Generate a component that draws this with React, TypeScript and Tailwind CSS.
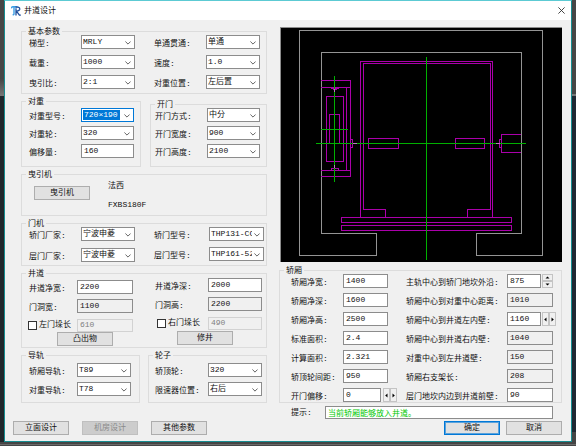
import React, { useId, useState } from 'react';
import clsx from 'clsx';

const Group = ({ title, className, children }: { title: string; className?: string; children: React.ReactNode }) => (
    <fieldset className={clsx('min-w-0 border border-[#dcdcdc]', className)}>
        <legend className="ml-1 h-px px-[2px] leading-px">{title}</legend>
        {children}
    </fieldset>
);

type RowProps = { label: string; labelWidth?: string; children: (id: string) => React.ReactNode };

const Row = ({ label, labelWidth = 'w-[53px]', children }: RowProps) => {
    const id = useId();
    return (
        <div className="flex h-[14px] items-center">
            <label htmlFor={id} className={clsx('shrink-0 whitespace-nowrap pl-px pt-1', labelWidth)}>{label}</label>
            {children(id)}
        </div>
    );
};

type SelectProps = { label: string; value: string; labelWidth?: string; active?: boolean };

const SelectRow = ({ label, value, labelWidth, active }: SelectProps) => (
    <Row label={label} labelWidth={labelWidth}>
        {(id) => (
            <div className={clsx('relative h-[14px] min-w-0 flex-1 border bg-white', active ? 'border-[#0078d7] pt-px' : 'border-[#8c8c8c]')}>
                <select
                    id={id}
                    defaultValue={value}
                    className={clsx('block appearance-none overflow-hidden pl-px outline-none', active ? 'ml-px h-[10px] w-[37px] bg-[#0078d7] leading-[10px] text-white' : 'h-[12px] w-[calc(100%-11px)] leading-[12px]')}
                >
                    <option>{value}</option>
                </select>
                <svg viewBox="0 0 6 4" className="pointer-events-none absolute right-[3px] top-[5px] h-1 w-[6px]" fill="none" stroke="#555" strokeWidth="0.9">
                    <path d="M0.4 0.5 L3 3.1 L5.6 0.5" />
                </svg>
            </div>
        )}
    </Row>
);

type FieldProps = { label: string; value: string; labelWidth?: string; readOnly?: boolean; after?: React.ReactNode };

const FieldRow = ({ label, value, labelWidth, readOnly, after }: FieldProps) => (
    <Row label={label} labelWidth={labelWidth}>
        {(id) => (
            <>
                <input
                    id={id}
                    defaultValue={value}
                    readOnly={readOnly}
                    className={clsx('h-[14px] w-0 min-w-0 flex-1 border border-[#8c8c8c] px-[2px] pb-px outline-none', readOnly ? 'bg-[#f0f0f0]' : 'bg-white')}
                />
                {after}
            </>
        )}
    </Row>
);

const CheckRow = ({ label, value, labelWidth }: { label: string; value: string; labelWidth: string }) => {
    const [checked, setChecked] = useState(false);
    return (
        <div className="flex h-[14px] items-center">
            <label className={clsx('flex shrink-0 items-center gap-[2px] whitespace-nowrap', labelWidth)}>
                <input
                    type="checkbox"
                    checked={checked}
                    onChange={(e) => setChecked(e.target.checked)}
                    className="size-[9px] appearance-none border border-[#333] bg-white checked:bg-[#0078d7]"
                />
                {label}
            </label>
            <input
                aria-label={label}
                disabled={!checked}
                defaultValue={value}
                className="h-[13px] w-0 min-w-0 flex-1 border border-[#d2d2d2] px-[2px] pb-px text-[#808080]"
            />
        </div>
    );
};

const Button = ({ children, className, disabled }: { children: React.ReactNode; className?: string; disabled?: boolean }) => (
    <button
        disabled={disabled}
        className={clsx('block h-[14px] w-14 border leading-[12px]', disabled ? 'border-[#bfbfbf] bg-[#cccccc] text-[#8a8a8a]' : 'bg-[#e1e1e1]', className ?? 'border-[#adadad]')}
    >
        {children}
    </button>
);

const Spinner = ({ vertical, className }: { vertical?: boolean; className?: string }) => {
    const arrows = vertical ? ['M1.5 3.5 H5.5 L3.5 1.5 Z', 'M1.5 1.5 H5.5 L3.5 3.5 Z'] : ['M3.5 0.5 V4.5 L1.2 2.5 Z', 'M1.5 0.5 V4.5 L3.8 2.5 Z'];
    return (
        <div className={clsx('flex h-[14px] w-[11px] shrink-0', vertical && 'flex-col', className)}>
            {arrows.map((d, i) => (
                <button key={d} aria-label={i ? '增加' : '减少'} className="flex flex-1 items-center justify-center border border-[#c4c4c4] bg-[#f0f0f0]">
                    <svg viewBox={vertical ? '0 0 7 5' : '0 0 5 5'} className={vertical ? 'h-[5px] w-[7px]' : 'h-[5px] w-[5px] shrink-0'}>
                        <path d={d} fill="#000" />
                    </svg>
                </button>
            ))}
        </div>
    );
};

const ShaftPlan = () => (
    <div className="pl-px">
        <svg viewBox="280 27 282 235" className="block w-full bg-black" fill="none" strokeWidth="1" shapeRendering="crispEdges">
            <path stroke="#949494" d="M376.5 255.5 H299.5 V30.5 H542.5 V255.5 H476.5 V233.5 H521.5 V52.5 H321.5 V233.5 H376.5 Z" />
            <g stroke="#aa00aa">
                <path d="M360.5 217 V61.5 H492.5 V217" />
                <path d="M385.5 217 V209.5 H363.5 V63.5 H490.5 V209.5 H467.5 V217" />
                <path d="M341.5 217.5 H511.5 V222.5 H341.5 Z M341.5 225.5 H511.5 V230.5 H341.5 Z" />
                <path d="M368.5 138.5 H398.5 V148.5 H368.5 Z M455.5 138.5 H484.5 V148.5 H455.5 Z" />
                <path d="M521 134.5 H501.5 V152.5 H521" />
                <path d="M321 80.5 H350.5 V176.5 H321 M321 87.5 H350.5 M346.5 87.5 V170.5 M321 170.5 H350.5" />
                <path d="M326.5 96.5 H343.5 V161.5 H326.5 Z M329.5 143.5 V114.5 H339.5 V143.5 Z" />
                <path d="M351 139.5 H352.5 V147.5 H351 M501 139.5 H499.5 V147.5 H501" />
                <path d="M331 88.5 H338.5 M332.5 89.5 H337 M331.5 170 V168.5 H338.5 V170" />
            </g>
            <g stroke="#00b000">
                <path d="M426.5 57 V260 M316 143.5 H526 M334.5 76 V182" />
                <path d="M321 129.5 H348" />
            </g>
            <path stroke="#c070c0" d="M353 143.5 H357 M496 143.5 H500 M334.5 89 V92 M334.5 165 V168" />
            <path stroke="#8c8c8c" d="M280 27.5 H562 M280.5 27 V262" />
        </svg>
    </div>
);

const App = () => {
    const hintId = useId();
    return (
        <div className="flex min-h-screen flex-col bg-[#454545] font-['Liberation_Mono','Noto_Sans_CJK_SC',monospace] text-[8px] leading-[10px] text-[#111]">
            <div className="flex">
                <div className="flex w-1 shrink-0 flex-col bg-[#20272c]">
                    <div className="h-[78px] bg-[#464646]" />
                    <div className="h-[18px] bg-linear-to-b from-[#444] to-[#777]" />
                </div>
                <main className="min-w-0 flex-1 border border-[#168d91] border-t-[#5ccad3] bg-[#f0f0f0] pb-[6px]">
                    <header className="flex h-[19px] items-center bg-white px-[6px]">
                        <svg viewBox="0 0 10 10" className="size-[10px]" fill="none">
                            <path d="M0.3 2.3 Q0.5 0.7 2.2 0.8 H6.5 M3 1 V8.2 L1.7 9.2" stroke="#3b9ee5" strokeWidth="1.4" />
                            <path d="M5 9.4 V2.2 M4.4 1.2 H7.2 Q9 1.6 8.8 3.2 Q8.4 5 5.5 5.1 L8.4 9.2 H9.8" stroke="#1c4d9c" strokeWidth="1.3" />
                        </svg>
                        <h1 className="ml-[3px]">井道设计</h1>
                        <button aria-label="关闭" className="ml-auto">
                            <svg viewBox="0 0 7 7" className="size-[7px]" stroke="#333" strokeWidth="0.9">
                                <path d="M0.4 0.4 L6.6 6.6 M6.6 0.4 L0.4 6.6" />
                            </svg>
                        </button>
                    </header>

                    <div className="grid grid-cols-[254fr_283fr] gap-x-3 pl-2 pr-[9px]">
                        <div className="flex flex-col pt-[11px]">
                            <div className="ml-2 flex flex-col gap-[7px]">
                                <Group title="基本参数">
                                    <div className="grid grid-cols-2 gap-x-[18px] gap-y-[6px] px-[6px] pb-1 pt-[3px]">
                                        <SelectRow label="梯型:" value="MRLY" />
                                        <SelectRow label="单通贯通:" value="单通" />
                                        <SelectRow label="载重:" value="1000" />
                                        <SelectRow label="速度:" value="1.0" />
                                        <SelectRow label="曳引比:" value="2:1" />
                                        <SelectRow label="对重位置:" value="左后置" />
                                    </div>
                                </Group>

                                <div className="grid grid-cols-[120fr_117fr] gap-x-[9px]">
                                    <Group title="对重">
                                        <div className="flex flex-col gap-1 px-[6px] pb-2 pt-[6px]">
                                            <SelectRow label="对重型号:" value="720×190" active />
                                            <SelectRow label="对重轮:" value="320" />
                                            <FieldRow label="偏移量:" value="160" />
                                        </div>
                                    </Group>
                                    <Group title="开门" className="mt-[3px]">
                                        <div className="flex flex-col gap-1 pl-[3px] pr-[6px] pt-[3px]">
                                            <SelectRow label="开门方式:" value="中分" />
                                            <SelectRow label="开门宽度:" value="900" />
                                            <SelectRow label="开门高度:" value="2100" />
                                        </div>
                                    </Group>
                                </div>

                                <Group title="曳引机">
                                    <div className="flex gap-[18px] pb-[5px] pl-3 pt-[6px]">
                                        <div className="pt-[5px]">
                                            <Button>曳引机</Button>
                                        </div>
                                        <div className="flex flex-col gap-[9px]">
                                            <p>法西</p>
                                            <p>FXBS180F</p>
                                        </div>
                                    </div>
                                </Group>

                                <Group title="门机">
                                    <div className="grid grid-cols-[107fr_111fr] gap-x-[18px] pb-[3px] pl-[6px] pr-[2px] pt-[3px]">
                                        <div className="flex flex-col gap-[7px]">
                                            <SelectRow label="轿门厂家:" value="宁波申菱" />
                                            <SelectRow label="层门厂家:" value="宁波申菱" />
                                        </div>
                                        <div className="flex flex-col gap-[6px]">
                                            <SelectRow label="轿门型号:" value="THP131-CC" labelWidth="w-14" />
                                            <SelectRow label="层门型号:" value="THP161-52" labelWidth="w-14" />
                                        </div>
                                    </div>
                                </Group>

                                <Group title="井道">
                                    <div className="grid grid-cols-[105fr_108fr] gap-x-[21px] pb-px pl-[6px] pr-1">
                                        <div className="pt-[6px]">
                                            <div className="flex flex-col gap-[5px]">
                                                <FieldRow label="井道净宽:" value="2200" labelWidth="w-[49px]" />
                                                <FieldRow label="门洞宽:" value="1100" labelWidth="w-[49px]" readOnly />
                                                <CheckRow label="左门垛长" value="610" labelWidth="w-[49px]" />
                                            </div>
                                            <Button className="ml-[29px] border-[#adadad]">凸出物</Button>
                                        </div>
                                        <div className="pt-1">
                                            <div className="flex flex-col gap-[5px]">
                                                <FieldRow label="井道净深:" value="2000" labelWidth="w-[54px]" />
                                                <FieldRow label="门洞高:" value="2200" labelWidth="w-[54px]" readOnly />
                                                <CheckRow label="右门垛长" value="490" labelWidth="w-[54px] pl-[3px]" />
                                            </div>
                                            <Button className="ml-[23px] mt-px border-[#adadad]">修井</Button>
                                        </div>
                                    </div>
                                </Group>

                                <div className="grid grid-cols-2 gap-x-2">
                                    <Group title="导轨">
                                        <div className="flex flex-col gap-[5px] pb-[6px] pl-[6px] pr-2 pt-[7px]">
                                            <SelectRow label="轿厢导轨:" value="T89" labelWidth="w-[49px]" />
                                            <SelectRow label="对重导轨:" value="T78" labelWidth="w-[49px]" />
                                        </div>
                                    </Group>
                                    <Group title="轮子">
                                        <div className="flex flex-col gap-[5px] pl-[5px] pr-1 pt-[7px]">
                                            <SelectRow label="轿顶轮:" value="320" labelWidth="w-[54px]" />
                                            <SelectRow label="限速器位置:" value="右后" labelWidth="w-[54px]" />
                                        </div>
                                    </Group>
                                </div>
                            </div>

                            <div className="mt-auto flex gap-[13px]">
                                <Button>立面设计</Button>
                                <Button disabled>机房设计</Button>
                                <Button>其他参数</Button>
                            </div>
                        </div>

                        <div className="pt-[7px]">
                            <ShaftPlan />
                            <Group title="轿厢" className="mt-2">
                                <div className="grid grid-cols-[98fr_148fr] gap-x-[17px] gap-y-[5px] pl-[10px] pr-2 pt-[3px]">
                                    <FieldRow label="轿厢净宽:" value="1400" />
                                    <FieldRow label="主轨中心到轿门地坎外沿:" value="875" labelWidth="w-[102px]" after={<Spinner vertical className="ml-px" />} />
                                    <FieldRow label="轿厢净深:" value="1600" />
                                    <FieldRow label="轿厢中心到对重中心距离:" value="1010" labelWidth="w-[102px]" readOnly />
                                    <FieldRow label="轿厢净高:" value="2500" />
                                    <FieldRow label="轿厢中心到井道左内壁:" value="1160" labelWidth="w-[102px]" after={<Spinner className="ml-px" />} />
                                    <FieldRow label="标准面积:" value="2.4" />
                                    <FieldRow label="轿厢中心到井道右内壁:" value="1040" labelWidth="w-[102px]" readOnly />
                                    <FieldRow label="计算面积:" value="2.321" />
                                    <FieldRow label="对重中心到左井道壁:" value="150" labelWidth="w-[102px]" readOnly />
                                    <FieldRow label="轿顶轮间距:" value="950" />
                                    <FieldRow label="轿厢右支架长:" value="208" labelWidth="w-[102px]" readOnly />
                                    <div className="-mr-[6px]">
                                        <FieldRow label="开门偏移:" value="0" after={<Spinner className="ml-[2px]" />} />
                                    </div>
                                    <FieldRow label="层门地坎内边到井道前壁:" value="90" labelWidth="w-[102px]" />
                                </div>
                            </Group>
                            <div className="mt-[3px] flex items-center pl-3 pr-[9px]">
                                <label htmlFor={hintId} className="w-[34px] shrink-0">提示:</label>
                                <input
                                    id={hintId}
                                    readOnly
                                    value="当前轿厢能够放入井道。"
                                    className="h-[13px] min-w-0 flex-1 border border-[#8c8c8c] bg-white px-[2px] pb-px text-[#00c800] outline-none"
                                />
                            </div>
                            <div className="mt-[2px] flex justify-end gap-[6px]">
                                <Button className="border-[#0078d7] outline outline-[#0078d7]/60 -outline-offset-2">确定</Button>
                                <Button>取消</Button>
                            </div>
                        </div>
                    </div>
                </main>
                <div className="flex w-1 shrink-0 flex-col bg-[#1f2833]">
                    <div className="h-[96px] border-b-2 border-[#777] bg-[#464646]" />
                    <div className="mt-auto h-[10px] bg-[#454545]" />
                </div>
            </div>
            <div className="mt-[2px] h-px bg-[#6a6a6a]" />
        </div>
    );
};

export default App;
